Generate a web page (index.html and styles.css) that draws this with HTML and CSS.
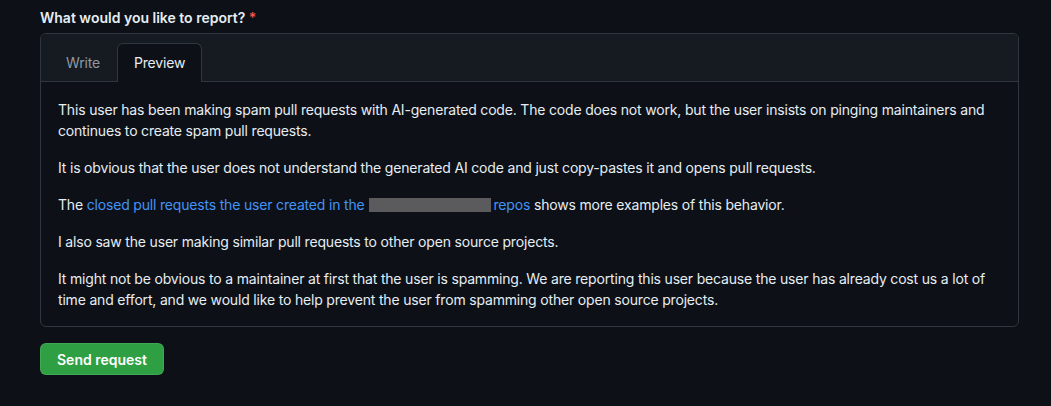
FILE: index.html
```html
<!DOCTYPE html>
<html>
<head>
<meta charset="utf-8">
<link rel="stylesheet" href="styles.css">
</head>
<body>
<div class="page">
  <label class="field-label">What would you like to report? <span class="req">*</span></label>
  <div class="editor">
    <div class="tabs">
      <div class="tab">Write</div>
      <div class="tab active">Preview</div>
    </div>
    <div class="preview">
      <p>This user has been making spam pull requests with AI-generated code. The code does not work, but the user insists on pinging maintainers and continues to create spam pull requests.</p>
      <p>It is obvious that the user does not understand the generated AI code and just copy-pastes it and opens pull requests.</p>
      <p>The <a href="#">closed pull requests the user created in the<span class="redact"></span>repos</a> shows more examples of this behavior.</p>
      <p>I also saw the user making similar pull requests to other open source projects.</p>
      <p>It might not be obvious to a maintainer at first that the user is spamming. We are reporting this user because the user has already cost us a lot of time and effort, and we would like to help prevent the user from spamming other open source projects.</p>
    </div>
  </div>
  <button class="btn-primary">Send request</button>
</div>
</body>
</html>
```
FILE: styles.css
```css
html, body {
  margin: 0;
  padding: 0;
  background: #0d1117;
}
body {
  font-family: Inter, "Noto Sans", "Liberation Sans", sans-serif;
  font-size: 14px;
  letter-spacing: -0.18px;
  color: #e6edf3;
}
.page {
  padding: 9px 32px 0 40px;
  display: flex;
  flex-direction: column;
  align-items: flex-start;
}
.field-label {
  font-weight: 600;
  font-size: 14px;
  line-height: 18px;
  color: #e6edf3;
  margin-bottom: 6px;
  letter-spacing: 0;
}
.req {
  color: #f85149;
}
.editor {
  align-self: stretch;
  border: 1px solid #30363d;
  border-radius: 6px;
  overflow: hidden;
}
.tabs {
  background: #161b22;
  border-bottom: 1px solid #30363d;
  display: flex;
  padding: 9px 8px 0 8px;
  height: 38px;
}
.tab {
  padding: 0 16px;
  height: 39px;
  line-height: 38px;
  color: #9198a1;
  border: 1px solid transparent;
  border-bottom: none;
  border-radius: 6px 6px 0 0;
  box-sizing: border-box;
}
.tab.active {
  background: #0d1117;
  border-color: #30363d;
  color: #e6edf3;
}
.preview {
  padding: 17px 17px 16px 17px;
  line-height: 21px;
}
.preview p {
  margin: 0 0 16px 0;
}
.preview p:last-child {
  margin-bottom: 0;
}
.preview a {
  color: #4493f8;
  text-decoration: none;
}
.redact {
  display: inline-block;
  width: 122px;
  height: 14px;
  margin: 0 3px 0 4px;
  background: #5b5b5d;
  vertical-align: -2px;
}
.btn-primary {
  margin-top: 16px;
  background: #2ea043;
  color: #ffffff;
  font-family: inherit;
  font-weight: 600;
  font-size: 14px;
  letter-spacing: 0;
  white-space: nowrap;
  border: 1px solid rgba(240,246,252,0.1);
  border-radius: 6px;
  height: 32px;
  padding: 0 16px;
}
```
